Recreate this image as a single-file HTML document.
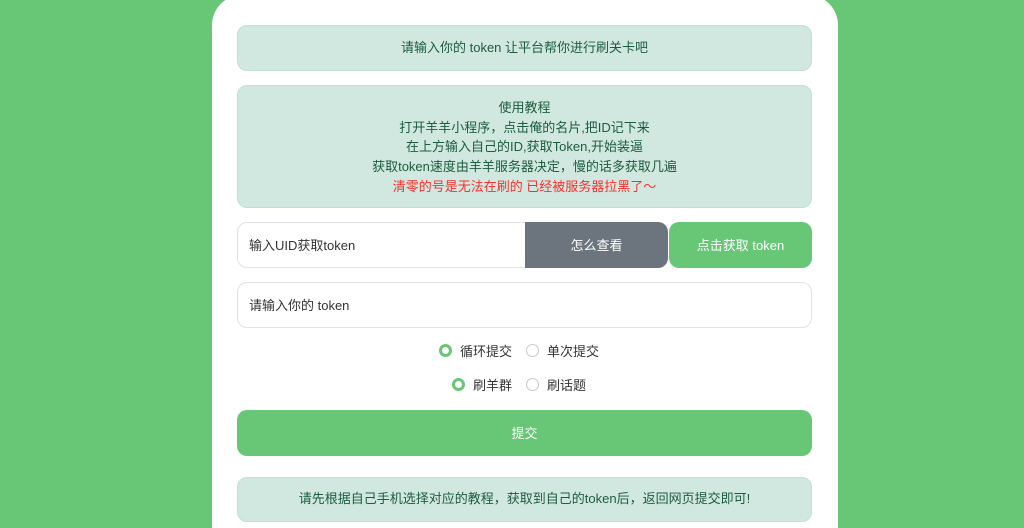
<!DOCTYPE html>
<html style="overflow:hidden;width:1024px;height:528px"><head><meta charset="utf-8"><style>
*{box-sizing:border-box;margin:0;padding:0}
body{width:1024px;height:528px;overflow:hidden;background:#68c677;font-family:"Liberation Sans","Noto Sans CJK SC",sans-serif;font-size:13px;position:relative}
.card{position:absolute;left:212px;top:-5px;width:626px;height:533px;background:#fff;border-radius:30px 30px 0 0}
.box{position:absolute;left:237px;width:575px;background:#d0e8df;border:1px solid #c0e0d2;border-radius:10px;color:#1d5c3e;text-align:center}
.inp{position:absolute;border:1px solid #dfe2e6;border-radius:10px;background:#fff;color:#333;padding-left:11px;display:flex;align-items:center}
.btn{position:absolute;color:#fff;display:flex;align-items:center;justify-content:center}
.r{position:absolute;display:flex;align-items:center;color:#333;font-size:13px}
.dot{width:13px;height:13px;border-radius:50%;margin-right:8px}
.on{border:3.5px solid #68c677;background:#fff}
.off{border:1px solid #c8c8c8;background:#fff}
</style></head><body>
<div class="card"></div>
<div class="box" style="top:25px;height:46px;line-height:43px">请输入你的 token 让平台帮你进行刷关卡吧</div>
<div class="box" style="top:85px;height:123px;padding-top:12px;line-height:19.7px">使用教程<br>打开羊羊小程序，点击俺的名片,把ID记下来<br>在上方输入自己的ID,获取Token,开始装逼<br>获取token速度由羊羊服务器决定，慢的话多获取几遍<br><span style="color:#ff2d2d">清零的号是无法在刷的 已经被服务器拉黑了～</span></div>
<div class="inp" style="left:237px;top:222px;width:300px;height:46px;border-radius:10px 0 0 10px;padding-bottom:2px">输入UID获取token</div>
<div class="btn" style="left:525px;top:222px;width:143px;height:46px;background:#6c757d;border-radius:0 10px 10px 0;padding-bottom:2px">怎么查看</div>
<div class="btn" style="left:669px;top:222px;width:143px;height:46px;background:#68c677;border-radius:10px;padding-bottom:2px">点击获取 token</div>
<div class="inp" style="left:237px;top:282px;width:575px;height:46px;padding-bottom:2px">请输入你的 token</div>
<div class="r" style="left:439px;top:341px"><span class="dot on"></span>循环提交</div>
<div class="r" style="left:526px;top:341px"><span class="dot off"></span>单次提交</div>
<div class="r" style="left:452px;top:375px"><span class="dot on"></span>刷羊群</div>
<div class="r" style="left:526px;top:375px"><span class="dot off"></span>刷话题</div>
<div class="btn" style="left:237px;top:410px;width:575px;height:46px;background:#68c677;border-radius:10px;padding-bottom:2px">提交</div>
<div class="box" style="top:477px;height:45px;line-height:41px">请先根据自己手机选择对应的教程，获取到自己的token后，返回网页提交即可!</div>
</body></html>
